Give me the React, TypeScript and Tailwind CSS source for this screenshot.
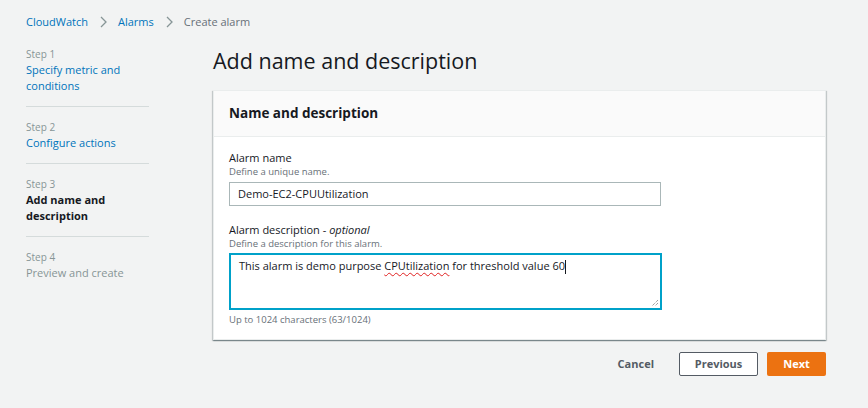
import React from 'react'

function Chevron() {
  return (
    <svg width="10" height="12" viewBox="0 0 10 12" className="mx-[10px]">
      <path d="M3 1l5 5-5 5" fill="none" stroke="#879596" strokeWidth="1.3" />
    </svg>
  )
}

const steps = [
  { n: 'Step 1', label: 'Specify metric and conditions', state: 'link' },
  { n: 'Step 2', label: 'Configure actions', state: 'link' },
  { n: 'Step 3', label: 'Add name and description', state: 'current' },
  { n: 'Step 4', label: 'Preview and create', state: 'disabled' },
]

export default function App() {
  return (
    <div
      className="w-[868px] h-[408px] bg-[#f2f3f3] text-[#16191f] overflow-hidden"
      style={{ fontFamily: '"Open Sans", "Liberation Sans", sans-serif' }}
    >
      {/* Breadcrumbs */}
      <div className="flex items-center pl-[26px] pt-[12px] h-[32px] text-[11px]">
        <span className="text-[#0073bb]">CloudWatch</span>
        <Chevron />
        <span className="text-[#0073bb]">Alarms</span>
        <Chevron />
        <span className="text-[#687078]">Create alarm</span>
      </div>

      <div className="flex">
        {/* Steps nav */}
        <div className="w-[213px] shrink-0 pl-[26px] pt-[14px]">
          {steps.map((s, i) => (
            <div
              key={s.n}
              className={`w-[123px] ${i < steps.length - 1 ? 'border-b border-[#d5dbdb] pb-[12px] mb-[12px]' : ''}`}
            >
              <div className="text-[10px] text-[#879596] leading-[16px]">{s.n}</div>
              <div
                className={`text-[11px] leading-[16px] ${
                  s.state === 'link'
                    ? 'text-[#0073bb]'
                    : s.state === 'current'
                    ? 'font-bold text-[#16191f]'
                    : 'text-[#879596]'
                }`}
              >
                {s.label}
              </div>
            </div>
          ))}
        </div>

        {/* Main */}
        <div className="w-[613px] shrink-0">
          <h1 className="text-[21.5px] leading-[30px] font-normal text-[#16191f] mt-[14px] mb-[14px]">
            Add name and description
          </h1>

          <div className="bg-white border border-[#eaeded] shadow-[0_1px_1px_0_rgba(0,28,36,0.3),1px_1px_1px_0_rgba(0,28,36,0.15),-1px_1px_1px_0_rgba(0,28,36,0.15)]">
            <div className="bg-[#fafafa] border-b border-[#eaeded] h-[46px] flex items-center px-[15px]">
              <h2 className="text-[13.5px] font-bold text-[#16191f]">Name and description</h2>
            </div>
            <div className="px-[15px] pt-[13px] pb-[13px]">
              <div className="text-[11px] leading-[16px] text-[#16191f]">Alarm name</div>
              <div className="text-[9.5px] leading-[12px] text-[#687078]">Define a unique name.</div>
              <div className="mt-[4px] w-[432px] h-[24px] border border-[#aab7b8] flex items-center px-[8px] text-[11px] text-[#16191f]">
                Demo-EC2-CPUUtilization
              </div>

              <div className="mt-[16px] text-[11px] leading-[16px] text-[#16191f]">
                Alarm description - <i>optional</i>
              </div>
              <div className="text-[9.5px] leading-[12px] text-[#687078]">
                Define a description for this alarm.
              </div>
              <div className="mt-[3px] relative w-[433px] h-[57px] border-2 border-[#00a1c9] px-[8px] pt-[3px] text-[11px] text-[#16191f]">
                <span>
                  This alarm is demo purpose{' '}
                  <span className="underline decoration-wavy decoration-[#e02020] decoration-1 underline-offset-2">
                    CPUtilization
                  </span>{' '}
                  for threshold value 60
                </span>
                <span className="inline-block w-px h-[14px] bg-[#16191f] align-middle" />
                <svg className="absolute right-[1px] bottom-[1px]" width="9" height="9" viewBox="0 0 9 9">
                  <path d="M8 2L2 8M8 5L5 8" stroke="#777" strokeWidth="1" strokeDasharray="1 1" />
                </svg>
              </div>
              <div className="mt-[4px] text-[9.5px] leading-[12px] text-[#687078]">
                Up to 1024 characters (63/1024)
              </div>
            </div>
          </div>

          <div className="flex justify-end items-center mt-[12px]">
            <span className="text-[11px] font-bold text-[#545b64] mr-[25px]">Cancel</span>
            <div className="w-[79px] h-[24px] border border-[#545b64] bg-white rounded-[2px] flex items-center justify-center text-[11px] font-bold text-[#545b64] mr-[9px]">
              Previous
            </div>
            <div className="w-[59px] h-[24px] bg-[#ec7211] rounded-[2px] flex items-center justify-center text-[11px] font-bold text-white">
              Next
            </div>
          </div>
        </div>
      </div>
    </div>
  )
}
